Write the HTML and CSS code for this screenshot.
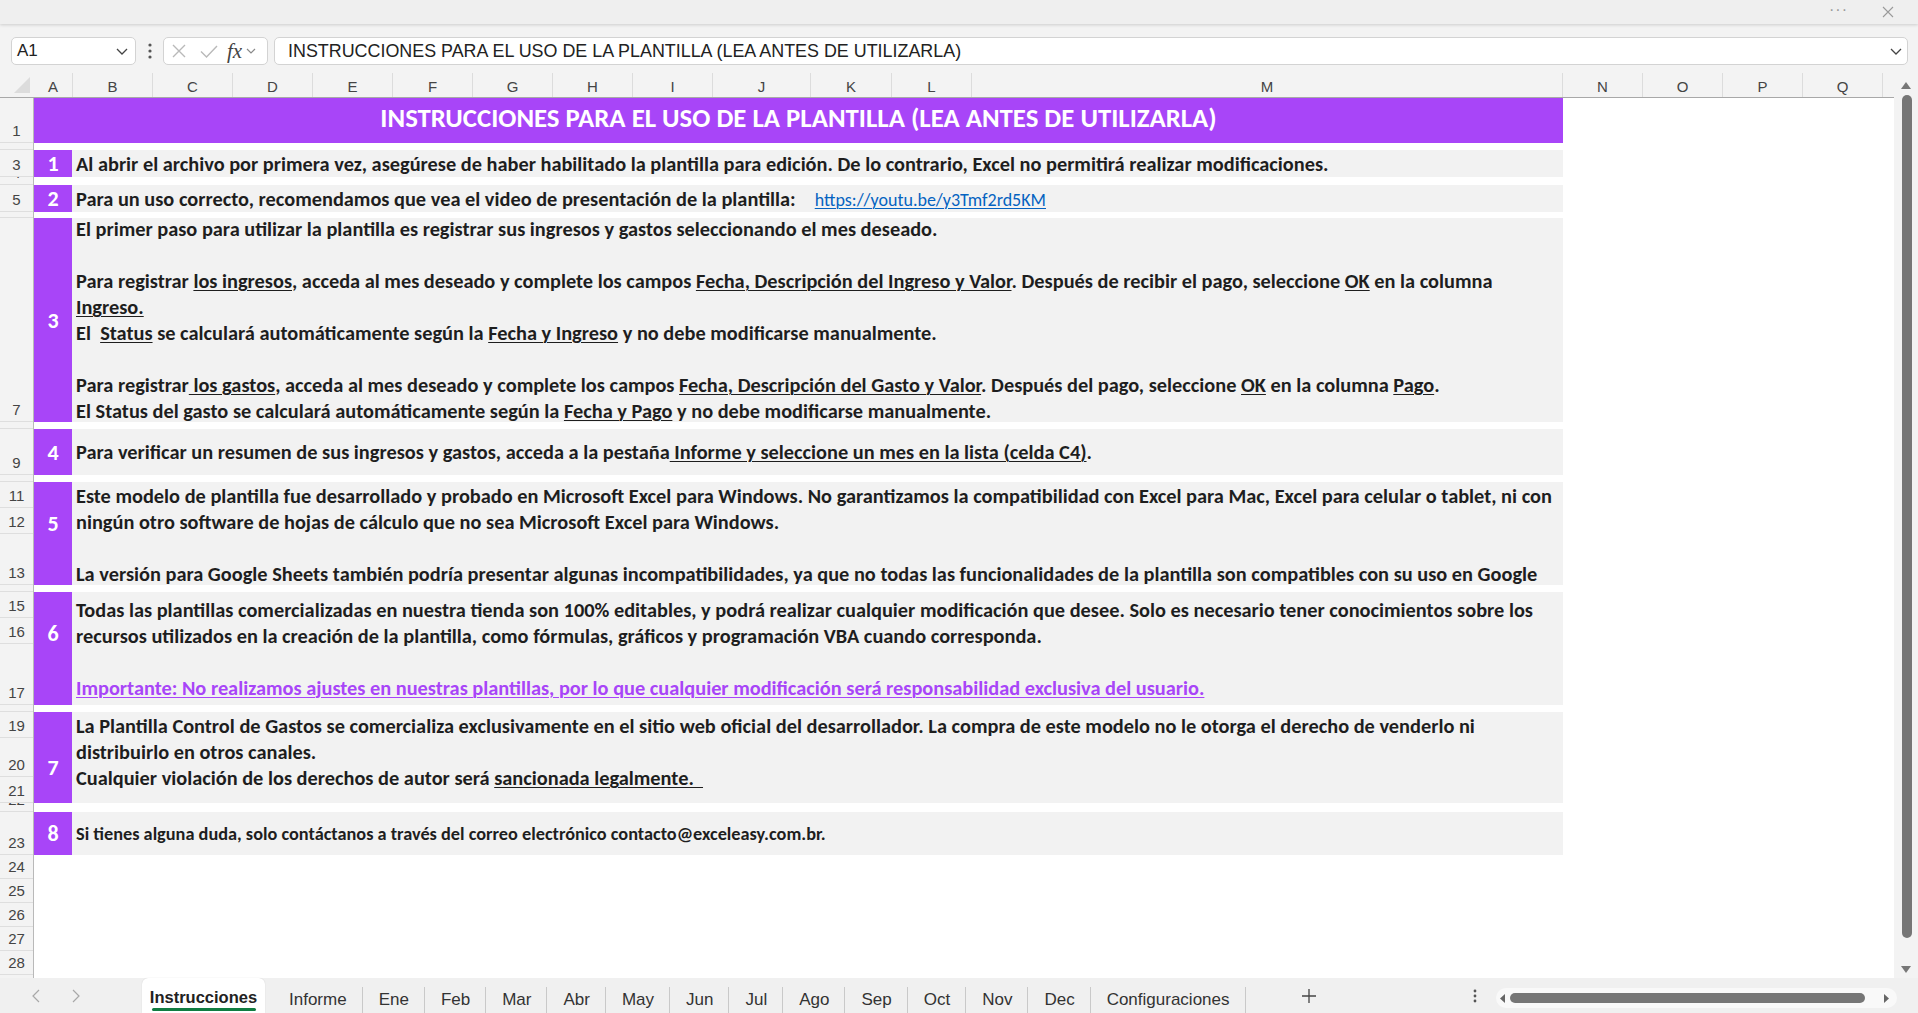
FILE: index.html
```html
<!DOCTYPE html>
<html lang="es">
<head>
<meta charset="utf-8">
<title>Instrucciones</title>
<link rel="stylesheet" href="styles.css">
</head>
<body>
<div class="app">
  <div class="titlebar">
    <span class="tdots">···</span>
    <svg class="tclose" width="12" height="12" viewBox="0 0 12 12"><path d="M1 1L11 11M11 1L1 11" stroke="#9a9a9a" stroke-width="1.1" fill="none"/></svg>
  </div>

  <div class="fbar">
    <div class="namebox">
      <span class="nbtext">A1</span>
      <svg width="12" height="7" viewBox="0 0 12 7"><path d="M1 1L6 6L11 1" stroke="#444" stroke-width="1.3" fill="none"/></svg>
    </div>
    <div class="vdots">
      <svg width="4" height="16" viewBox="0 0 4 16"><circle cx="2" cy="2" r="1.6" fill="#555"/><circle cx="2" cy="8" r="1.6" fill="#555"/><circle cx="2" cy="14" r="1.6" fill="#555"/></svg>
    </div>
    <div class="fxbox">
      <svg class="ic-x" width="14" height="14" viewBox="0 0 14 14"><path d="M1 1L13 13M13 1L1 13" stroke="#b9b9b9" stroke-width="1.4" fill="none"/></svg>
      <svg class="ic-ok" width="18" height="13" viewBox="0 0 18 13"><path d="M1 6.5L6.5 12L17 1" stroke="#b9b9b9" stroke-width="1.4" fill="none"/></svg>
      <span class="fx">fx</span>
      <svg class="ic-dd" width="10" height="6" viewBox="0 0 10 6"><path d="M1 1L5 5L9 1" stroke="#8a8a8a" stroke-width="1.2" fill="none"/></svg>
    </div>
    <div class="finput">
      <span class="ftext">INSTRUCCIONES PARA EL USO DE LA PLANTILLA (LEA ANTES DE UTILIZARLA)</span>
      <svg width="12" height="7" viewBox="0 0 12 7"><path d="M1 1L6 6L11 1" stroke="#444" stroke-width="1.3" fill="none"/></svg>
    </div>
  </div>

  <div class="sheet">
    <div class="grid">
      <div class="colheads">
        <div class="corner"><svg width="16" height="16" viewBox="0 0 16 16"><path d="M16 0L16 16L0 16Z" fill="#dcdcdc"/></svg></div>
        <div class="ch ca">A</div>
        <div class="ch c80">B</div>
        <div class="ch c80">C</div>
        <div class="ch c80">D</div>
        <div class="ch c80">E</div>
        <div class="ch c80">F</div>
        <div class="ch c80">G</div>
        <div class="ch c80">H</div>
        <div class="ch c80">I</div>
        <div class="ch cj">J</div>
        <div class="ch ck">K</div>
        <div class="ch c80">L</div>
        <div class="ch cm">M</div>
        <div class="ch c80">N</div>
        <div class="ch c80">O</div>
        <div class="ch c80">P</div>
        <div class="ch c80">Q</div>
      </div>
      <div class="body">
        <div class="rowheads">
          <div class="rh h45"><span>1</span></div>
          <div class="rh h7"><span>2</span></div>
          <div class="rh h27"><span>3</span></div>
          <div class="rh h8"><span>4</span></div>
          <div class="rh h27"><span>5</span></div>
          <div class="rh h6"><span>6</span></div>
          <div class="rh h204"><span>7</span></div>
          <div class="rh h7"><span>8</span></div>
          <div class="rh h46"><span>9</span></div>
          <div class="rh h7"><span>10</span></div>
          <div class="rh h26"><span>11</span></div>
          <div class="rh h26"><span>12</span></div>
          <div class="rh h51"><span>13</span></div>
          <div class="rh h7"><span>14</span></div>
          <div class="rh h26"><span>15</span></div>
          <div class="rh h26"><span>16</span></div>
          <div class="rh h61"><span>17</span></div>
          <div class="rh h7"><span>18</span></div>
          <div class="rh h26"><span>19</span></div>
          <div class="rh h39"><span>20</span></div>
          <div class="rh h26"><span>21</span></div>
          <div class="rh h9"><span>22</span></div>
          <div class="rh h43"><span>23</span></div>
          <div class="rh h24"><span>24</span></div>
          <div class="rh h24"><span>25</span></div>
          <div class="rh h24"><span>26</span></div>
          <div class="rh h24"><span>27</span></div>
          <div class="rh h24"><span>28</span></div>
          <div class="rh h24"><span>29</span></div>
        </div>
        <div class="cells">
          <div class="title">INSTRUCCIONES PARA EL USO DE LA PLANTILLA (LEA ANTES DE UTILIZARLA)</div>

          <div class="blk b1">
            <div class="num">1</div>
            <div class="txt">
<div class="ln">Al abrir el archivo por primera vez, asegúrese de haber habilitado la plantilla para edición. De lo contrario, Excel no permitirá realizar modificaciones.</div>
            </div>
          </div>

          <div class="blk b2">
            <div class="num">2</div>
            <div class="txt">
<div class="ln">Para un uso correcto, recomendamos que vea el video de presentación de la plantilla:<span class="link">https://youtu.be/y3Tmf2rd5KM</span></div>
            </div>
          </div>

          <div class="blk b3">
            <div class="num">3</div>
            <div class="txt">
<div class="ln">El primer paso para utilizar la plantilla es registrar sus ingresos y gastos seleccionando el mes deseado.</div>
<div class="ln"></div>
<div class="ln">Para registrar <u>los ingresos</u>, acceda al mes deseado y complete los campos <u>Fecha, Descripción del Ingreso y Valor</u>. Después de recibir el pago, seleccione <u>OK</u> en la columna</div>
<div class="ln"><u>Ingreso.</u></div>
<div class="ln">El  <u>Status</u> se calculará automáticamente según la <u>Fecha y Ingreso</u> y no debe modificarse manualmente.</div>
<div class="ln"></div>
<div class="ln">Para registrar<u> los gastos</u>, acceda al mes deseado y complete los campos <u>Fecha, Descripción del Gasto y Valor</u>. Después del pago, seleccione <u>OK</u> en la columna <u>Pago</u>.</div>
<div class="ln">El Status del gasto se calculará automáticamente según la <u>Fecha y Pago</u> y no debe modificarse manualmente.</div>
            </div>
          </div>

          <div class="blk b4">
            <div class="num">4</div>
            <div class="txt">
<div class="ln">Para verificar un resumen de sus ingresos y gastos, acceda a la pestaña<u> Informe y seleccione un mes en la lista (celda C4)</u>.</div>
            </div>
          </div>

          <div class="blk b5">
            <div class="num n5">5</div>
            <div class="txt top">
<div class="ln">Este modelo de plantilla fue desarrollado y probado en Microsoft Excel para Windows. No garantizamos la compatibilidad con Excel para Mac, Excel para celular o tablet, ni con</div>
<div class="ln">ningún otro software de hojas de cálculo que no sea Microsoft Excel para Windows.</div>
<div class="ln"></div>
<div class="ln">La versión para Google Sheets también podría presentar algunas incompatibilidades, ya que no todas las funcionalidades de la plantilla son compatibles con su uso en Google</div>
            </div>
          </div>

          <div class="blk b6">
            <div class="num n6">6</div>
            <div class="txt">
<div class="ln">Todas las plantillas comercializadas en nuestra tienda son 100% editables, y podrá realizar cualquier modificación que desee. Solo es necesario tener conocimientos sobre los</div>
<div class="ln">recursos utilizados en la creación de la plantilla, como fórmulas, gráficos y programación VBA cuando corresponda.</div>
<div class="ln"></div>
<div class="ln"><u class="warn">Importante: No realizamos ajustes en nuestras plantillas, por lo que cualquier modificación será responsabilidad exclusiva del usuario.</u></div>
            </div>
          </div>

          <div class="blk b7">
            <div class="num n7">7</div>
            <div class="txt top">
<div class="ln">La Plantilla Control de Gastos se comercializa exclusivamente en el sitio web oficial del desarrollador. La compra de este modelo no le otorga el derecho de venderlo ni</div>
<div class="ln">distribuirlo en otros canales.</div>
<div class="ln">Cualquier violación de los derechos de autor será <u>sancionada legalmente.  </u></div>
            </div>
          </div>

          <div class="blk b8">
            <div class="num">8</div>
            <div class="txt small">
<div class="ln">Si tienes alguna duda, solo contáctanos a través del correo electrónico contacto@exceleasy.com.br.</div>
            </div>
          </div>
        </div>
      </div>
    </div>
    <div class="vscroll">
      <div class="vup"><svg width="10" height="7" viewBox="0 0 10 7"><path d="M5 0L10 7L0 7Z" fill="#777"/></svg></div>
      <div class="vthumb"></div>
      <div class="vdown"><svg width="10" height="7" viewBox="0 0 10 7"><path d="M0 0L10 0L5 7Z" fill="#777"/></svg></div>
    </div>
  </div>

  <div class="tabbar">
    <div class="nav">
      <svg width="8" height="14" viewBox="0 0 8 14"><path d="M7 1L1 7L7 13" stroke="#a8a8a8" stroke-width="1.2" fill="none"/></svg>
      <svg width="8" height="14" viewBox="0 0 8 14"><path d="M1 1L7 7L1 13" stroke="#a8a8a8" stroke-width="1.2" fill="none"/></svg>
    </div>
    <div class="tab-active">
      <span class="tab-label">Instrucciones</span>
      <span class="tab-line"></span>
    </div>
    <div class="tab first">Informe</div>
    <div class="tab">Ene</div>
    <div class="tab">Feb</div>
    <div class="tab">Mar</div>
    <div class="tab">Abr</div>
    <div class="tab">May</div>
    <div class="tab">Jun</div>
    <div class="tab">Jul</div>
    <div class="tab">Ago</div>
    <div class="tab">Sep</div>
    <div class="tab">Oct</div>
    <div class="tab">Nov</div>
    <div class="tab">Dec</div>
    <div class="tab">Configuraciones</div>
    <div class="plus">
      <svg width="14" height="14" viewBox="0 0 14 14"><path d="M7 0V14M0 7H14" stroke="#444" stroke-width="1.3" fill="none"/></svg>
    </div>
    <div class="spacer"></div>
    <div class="more">
      <svg width="4" height="14" viewBox="0 0 4 14"><circle cx="2" cy="2" r="1.4" fill="#555"/><circle cx="2" cy="7" r="1.4" fill="#555"/><circle cx="2" cy="12" r="1.4" fill="#555"/></svg>
    </div>
    <div class="hscroll">
      <svg width="5" height="9" viewBox="0 0 5 9"><path d="M5 0L5 9L0 4.5Z" fill="#666"/></svg>
      <div class="hthumb"></div>
      <svg width="5" height="9" viewBox="0 0 5 9"><path d="M0 0L5 4.5L0 9Z" fill="#666"/></svg>
    </div>
  </div>
</div>
</body>
</html>
```

FILE: styles.css
```css
* { box-sizing: border-box; margin: 0; padding: 0; }
html, body { width: 1918px; height: 1013px; overflow: hidden; }
body { background: #f3f3f3; font-family: "Liberation Sans", Arial, sans-serif; color: #222; }

.app { display: flex; flex-direction: column; width: 1918px; height: 1013px; }

/* title bar */
.titlebar { height: 24px; flex: none; background: #efefef; box-shadow: 0 1px 3px rgba(0,0,0,0.16); display: flex; justify-content: flex-end; align-items: center; gap: 34px; padding-right: 24px; position: relative; z-index: 2; }
.tdots { color: #9a9a9a; font-size: 16px; letter-spacing: 1px; line-height: 12px; padding-bottom: 4px; }

/* formula bar */
.fbar { height: 49px; flex: none; display: flex; align-items: flex-start; padding: 13px 0 0 11px; }
.namebox { width: 125px; height: 28px; background: #fff; border: 1px solid #d3d3d3; border-radius: 5px; display: flex; align-items: center; justify-content: space-between; padding: 0 7px 0 5px; }
.nbtext { font-size: 17px; color: #222; }
.vdots { width: 27px; height: 28px; display: flex; align-items: center; justify-content: center; }
.fxbox { width: 105px; height: 28px; background: #fff; border: 1px solid #d3d3d3; border-radius: 5px; display: flex; align-items: center; padding-left: 8px; }
.ic-x { margin-right: 14px; }
.ic-ok { margin-right: 9px; }
.fx { font-family: "Liberation Serif", "Times New Roman", serif; font-style: italic; font-size: 21px; color: #444; margin-right: 4px; line-height: 20px; }
.finput { flex: 1; margin: 0 10px 0 6px; height: 28px; background: #fff; border: 1px solid #d3d3d3; border-radius: 5px; display: flex; align-items: center; justify-content: space-between; padding: 0 5px 0 13px; }
.ftext { font-size: 17.9px; color: #222; white-space: nowrap; }

/* sheet */
.sheet { height: 905px; flex: none; display: flex; }
.grid { width: 1894px; display: flex; flex-direction: column; }
.colheads { height: 25px; display: flex; border-bottom: 1px solid #a8a8a8; background: #f3f3f3; }
.corner { width: 34px; display: flex; justify-content: flex-end; align-items: flex-end; padding: 0 4px 4px 0; }
.ch { display: flex; align-items: center; justify-content: center; font-size: 15px; color: #444; border-right: 1px solid #dcdcdc; padding-top: 2px; }
.ca { width: 39px; }
.c80 { width: 80px; }
.cj { width: 98px; }
.ck { width: 81px; }
.cm { width: 591px; }

.body { flex: 1; display: flex; overflow: hidden; }
.rowheads { width: 34px; border-right: 1px solid #b9b9b9; display: flex; flex-direction: column; background: #f3f3f3; }
.rh { flex: none; display: flex; justify-content: center; align-items: flex-end; overflow: hidden; border-bottom: 1px solid #dedede; font-size: 15px; color: #444; }
.rh span { line-height: 22px; display: block; }
.h6 { height: 6px; } .h7 { height: 7px; } .h8 { height: 8px; } .h9 { height: 9px; }
.h24 { height: 24px; } .h26 { height: 26px; } .h27 { height: 27px; } .h39 { height: 39px; }
.h43 { height: 43px; } .h45 { height: 45px; } .h46 { height: 46px; } .h51 { height: 51px; }
.h61 { height: 61px; } .h204 { height: 204px; }

.cells { flex: 1; background: #fff; display: flex; flex-direction: column; font-family: "Carlito", "Lato", "Liberation Sans", sans-serif; }
.title { width: 1529px; height: 45px; flex: none; background: #a845f8; color: #fff; font-weight: bold; font-size: 26.8px; display: flex; align-items: center; justify-content: center; padding-bottom: 7px; white-space: nowrap; }

.blk { width: 1529px; flex: none; display: flex; }
.b1 { margin-top: 7px; height: 27px; }
.b2 { margin-top: 8px; height: 27px; }
.b3 { margin-top: 6px; height: 204px; }
.b4 { margin-top: 7px; height: 46px; }
.b5 { margin-top: 7px; height: 103px; }
.b6 { margin-top: 7px; height: 113px; }
.b7 { margin-top: 7px; height: 91px; }
.b8 { margin-top: 9px; height: 43px; }

.num { width: 38px; flex: none; background: #a845f8; color: #fff; font-weight: bold; font-size: 22px; display: flex; align-items: center; justify-content: center; }
.n5 { padding-bottom: 21px; }
.n6 { padding-bottom: 31px; }
.n7 { padding-top: 19px; }

.txt { flex: 1; background: #f2f2f2; padding-left: 4px; display: flex; flex-direction: column; justify-content: center; overflow: hidden; font-weight: bold; font-size: 20.35px; line-height: 26px; color: #1e1e1e; }
.txt.top { justify-content: flex-start; padding-top: 1px; }
.txt.small { font-size: 18.3px; }
.ln { height: 26px; flex: none; white-space: pre; }
.ln u { text-decoration-thickness: 1px; text-underline-offset: 2px; }
.warn { color: #a845f8; }
.link { font-weight: normal; font-size: 18px; color: #0563c1; text-decoration: underline; text-decoration-thickness: 1px; text-underline-offset: 2px; margin-left: 19px; }

/* vertical scrollbar */
.vscroll { width: 24px; display: flex; flex-direction: column; align-items: center; background: #f3f3f3; }
.vup { height: 22px; display: flex; align-items: center; justify-content: center; padding-top: 2px; }
.vthumb { width: 10px; height: 843px; background: #767676; border-radius: 5px; margin-left: 2px; }
.vdown { flex: 1; display: flex; align-items: flex-end; justify-content: center; padding-bottom: 5px; }

/* tab bar */
.tabbar { height: 35px; flex: none; display: flex; align-items: flex-start; background: #f0f0f0; font-size: 17px; color: #333; }
.nav { width: 142px; height: 35px; display: flex; align-items: center; padding: 0 0 0 32px; gap: 32px; }
.tab-active { width: 123px; height: 35px; background: #fff; border-radius: 6px 6px 0 0; display: flex; flex-direction: column; align-items: center; box-shadow: 0 0 1px rgba(0,0,0,0.2); }
.tab-label { font-weight: bold; color: #222; line-height: 22px; margin-top: 8px; font-size: 16.5px; }
.tab-line { width: 104px; height: 3px; background: #107c41; border-radius: 2px; }
.tab { height: 26px; margin-top: 9px; padding: 0 15px 0 16px; border-right: 1px solid #c9c9c9; display: flex; align-items: center; white-space: nowrap; }
.tab.first { margin-left: 8px; }
.plus { margin-left: 56px; height: 35px; display: flex; align-items: center; }
.spacer { flex: 1; }
.more { width: 20px; height: 35px; display: flex; align-items: center; justify-content: center; }
.hscroll { width: 401px; height: 20px; margin: 10px 21px 0 11px; background: #f9f9f9; border-radius: 10px; display: flex; align-items: center; padding: 0 8px 0 4px; gap: 5px; }
.hthumb { flex: 1; height: 10px; background: #767676; border-radius: 5px; margin-right: 14px; }
```
